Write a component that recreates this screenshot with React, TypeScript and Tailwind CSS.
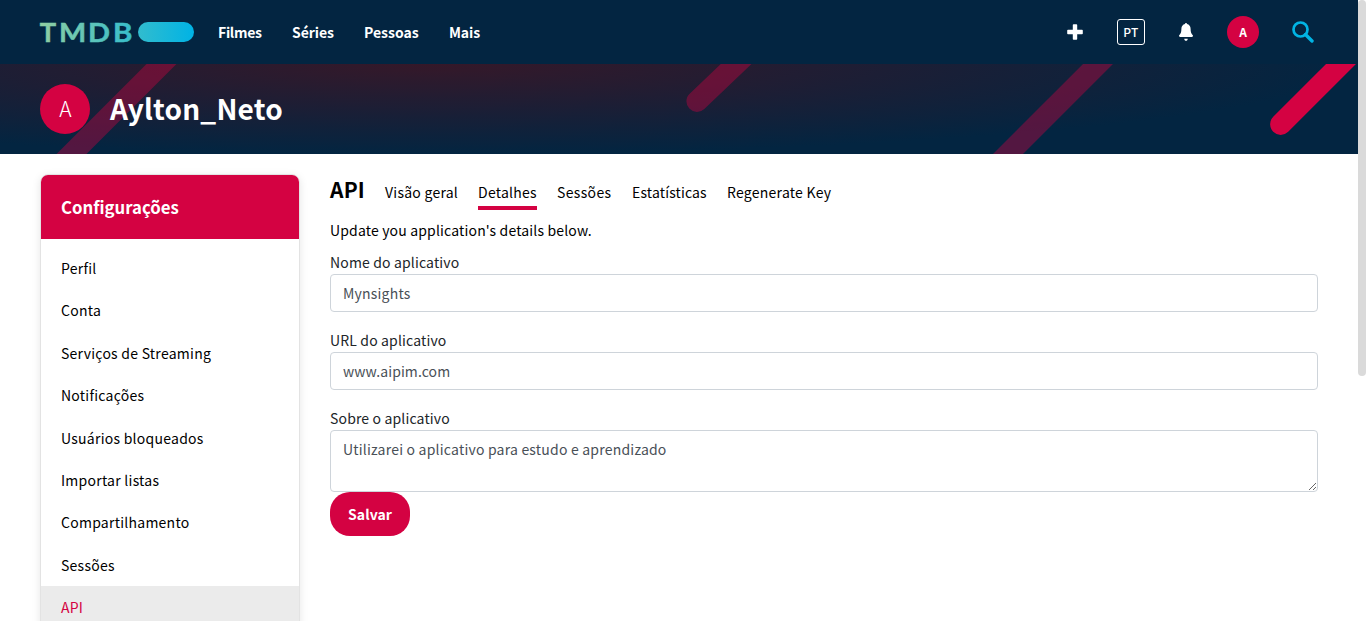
import React from 'react';

const navItems = [
  { label: 'Filmes', cls: 'w-[44px] tracking-[-0.3px]' },
  { label: 'Séries', cls: 'w-[42px] tracking-[-0.05px]' },
  { label: 'Pessoas', cls: 'w-[55px]' },
  { label: 'Mais', cls: 'w-[32px] tracking-[-0.1px]' },
];

const settings = [
  'Perfil',
  'Conta',
  'Serviços de Streaming',
  'Notificações',
  'Usuários bloqueados',
  'Importar listas',
  'Compartilhamento',
  'Sessões',
  'API',
];

const tabs = [
  { label: 'Visão geral', cls: 'w-[73px]' },
  { label: 'Detalhes', cls: 'w-[59px]' },
  { label: 'Sessões', cls: 'w-[55px] tracking-[0.35px]' },
  { label: 'Estatísticas', cls: 'w-[75px] tracking-[0.15px]' },
  { label: 'Regenerate Key', cls: 'w-[105px]' },
];

const logoLetters = [
  { char: 'T', x: -0.2, width: 16.4 },
  { char: 'M', x: 18.9, width: 27.2 },
  { char: 'D', x: 47.9, width: 22 },
  { char: 'B', x: 72.900, width: 19.4 },
];

function Logo() {
  return (
    <svg width="154" height="20" viewBox="0 0 154 20" className="shrink-0 overflow-visible" role="img">
      <defs>
        <linearGradient id="brand" gradientUnits="userSpaceOnUse" x1="0" y1="0" x2="154" y2="0">
          <stop offset="0" stopColor="#90cea1" />
          <stop offset="0.56" stopColor="#3cbec9" />
          <stop offset="1" stopColor="#00b3e5" />
        </linearGradient>
      </defs>
      <g fill="url(#brand)" stroke="url(#brand)" strokeWidth="0.5" className="font-['Lato',sans-serif] text-[27.4px] font-bold">
        {logoLetters.map((l) => (
          <text key={l.char} x={l.x} y="19.8" textLength={l.width} lengthAdjust="spacingAndGlyphs">
            {l.char}
          </text>
        ))}
      </g>
      <rect x="98" y="0" width="56" height="20" rx="10" fill="url(#brand)" />
    </svg>
  );
}

function HeroBackground() {
  return (
    <svg width="1358" height="90" viewBox="0 0 1358 90" className="absolute inset-0">
      <g stroke="#d40242" strokeWidth="21.2" strokeLinecap="round">
        <path d="M191.5-30 41.5 120" opacity="0.38" />
        <path d="M767.6-30 697 37.3" opacity="0.38" />
        <path d="M1128-30 978 120" opacity="0.38" />
        <path d="M1371-30 1280.7 60.3" />
      </g>
    </svg>
  );
}

function Header() {
  return (
    <header className="flex h-16 items-center justify-between bg-[#032541] pl-10 pr-11 text-white">
      <div className="flex items-center">
        <Logo />
        <nav className="ml-6 flex gap-[30px] text-[14px] font-bold leading-6">
          {navItems.map((n) => (
            <a key={n.label} className={`whitespace-nowrap ${n.cls}`}>
              {n.label}
            </a>
          ))}
        </nav>
      </div>
      <div className="flex items-center">
        <svg width="16" height="16" viewBox="0 0 16 16" fill="#fff">
          <path d="M5.800 1a.8.8 0 0 1 .8-.8h2.800a.8.8 0 0 1 .8.8v4.800H15a.8.8 0 0 1 .8.8v2.800a.8.8 0 0 1-.8.8h-4.800V15a.8.8 0 0 1-.8.8H6.600a.8.8 0 0 1-.8-.8v-4.800H1a.8.8 0 0 1-.8-.8V6.600A.8.8 0 0 1 1 5.800h4.800z" />
        </svg>
        <span className="ml-[34px] flex h-[26px] w-7 items-center justify-center rounded-[3px] border border-white text-[12px] font-medium leading-none tracking-[0.3px]">
          PT
        </span>
        <svg width="14" height="18" viewBox="0 0 14 18" fill="#fff" className="ml-[34px]">
          <path d="M7 0c.6 0 1 .5 1 1.100 2.200.5 3.600 2.300 3.600 4.700 0 3.400.7 5.100 2.200 6.500.5.600.1 1.700-.8 1.700H1c-.9 0-1.300-1.100-.8-1.700 1.500-1.400 2.200-3.100 2.200-6.500C2.400 3.400 3.800 1.600 6 1.100 6 .5 6.400 0 7 0zM5.300 15.700h3.400C8.700 17 8 17.800 7 17.800S5.300 17 5.300 15.700z" />
        </svg>
        <span className="ml-[34px] flex size-8 items-center justify-center rounded-full bg-[#d40242] text-[12px] font-bold leading-none">
          A
        </span>
        <svg width="22" height="22" viewBox="0 0 22 22" fill="none" stroke="#01b4e4" className="ml-[33px]">
          <circle cx="8.500" cy="8.500" r="7" strokeWidth="2.700" />
          <path d="M13.500 13.500 20 20" strokeWidth="3.400" strokeLinecap="round" />
        </svg>
      </div>
    </header>
  );
}

function Field({ label, children }: { label: string; children: React.ReactNode }) {
  return (
    <label className="flex flex-col">
      <span className="text-[14px] leading-6 tracking-[0.15px] text-[#212529]">{label}</span>
      {children}
    </label>
  );
}

export default function App() {
  return (
    <div className="flex h-[621px] w-[1366px] overflow-hidden bg-white font-['Noto_Sans_CJK_SC','Noto_Sans_CJK_JP',sans-serif] text-black">
      <div className="w-[1358px] shrink-0">
        <Header />
        <section className="relative h-[90px] overflow-hidden bg-[#032541] bg-[radial-gradient(ellipse_920px_90px_at_430px_0px,#351829_0%,#1c1e35_50%,#032541_100%)]">
          <HeroBackground />
          <div className="relative flex h-full items-center gap-5 pl-10 text-white">
            <span className="flex size-[50px] items-center justify-center rounded-full bg-[#d40242] pb-px pl-px text-[21px] font-light leading-none">
              A
            </span>
            <h1 className="pb-[2px] text-[28px] font-bold leading-none tracking-[0.2px]">Aylton_Neto</h1>
          </div>
        </section>

        <div className="flex px-10 pt-5">
          <aside className="h-[520px] w-[260px] shrink-0 overflow-hidden rounded-lg border border-[#e3e3e3] shadow-[0_2px_8px_rgba(0,0,0,0.1)]">
            <h2 className="flex h-16 items-center bg-[#d40242] px-5 text-[16.8px] font-bold leading-none text-white">
              Configurações
            </h2>
            <ul className="pt-[7.85px] text-[14px] tracking-[0.25px]">
              {settings.map((s) => (
                <li
                  key={s}
                  className={`flex h-[42.4px] items-center px-5 leading-6 ${s === 'API' ? 'bg-[#ebebeb] text-[#d40242]' : ''}`}
                >
                  {s}
                </li>
              ))}
            </ul>
          </aside>

          <main className="ml-[30px] w-[988px] pt-px">
            <div className="flex h-[35px] items-start">
              <h3 className="w-[35px] text-[21px] font-bold leading-[28px] tracking-[0.2px]">API</h3>
              <nav className="ml-5 flex gap-5 pt-[5px] text-[14px] tracking-[0.25px]">
                {tabs.map((t) => (
                  <a
                    key={t.label}
                    className={`h-[30px] whitespace-nowrap leading-6 ${t.cls} ${t.label === 'Detalhes' ? 'border-b-4 border-[#d40242]' : ''}`}
                  >
                    {t.label}
                  </a>
                ))}
              </nav>
            </div>
            <p className="mt-2 text-[14px] leading-6 tracking-[0.16px]">Update you application's details below.</p>
            <form className="mt-2 flex flex-col items-start">
              <div className="flex w-full flex-col gap-4">
                <Field label="Nome do aplicativo">
                  <input
                    defaultValue="Mynsights"
                    className="h-[38px] rounded border border-[#ced4da] px-3 text-[14px] leading-6 tracking-[0.2px] text-[#495057]"
                  />
                </Field>
                <Field label="URL do aplicativo">
                  <input
                    defaultValue="www.aipim.com"
                    className="h-[38px] rounded border border-[#ced4da] px-3 text-[14px] leading-6 tracking-[0.08px] text-[#495057]"
                  />
                </Field>
                <Field label="Sobre o aplicativo">
                  <textarea
                    defaultValue="Utilizarei o aplicativo para estudo e aprendizado"
                    className="h-[62px] rounded border border-[#ced4da] px-3 py-1.5 text-[14px] leading-6 tracking-[0.21px] text-[#495057]"
                  />
                </Field>
              </div>
              <button type="button" className="h-11 w-20 rounded-[20px] bg-[#d40242] text-[14px] font-bold tracking-[0.1px] text-white">
                Salvar
              </button>
            </form>
          </main>
        </div>
      </div>
      <div className="w-2 shrink-0 bg-white">
        <div className="h-[376px] rounded bg-[#dadada]" />
      </div>
    </div>
  );
}
